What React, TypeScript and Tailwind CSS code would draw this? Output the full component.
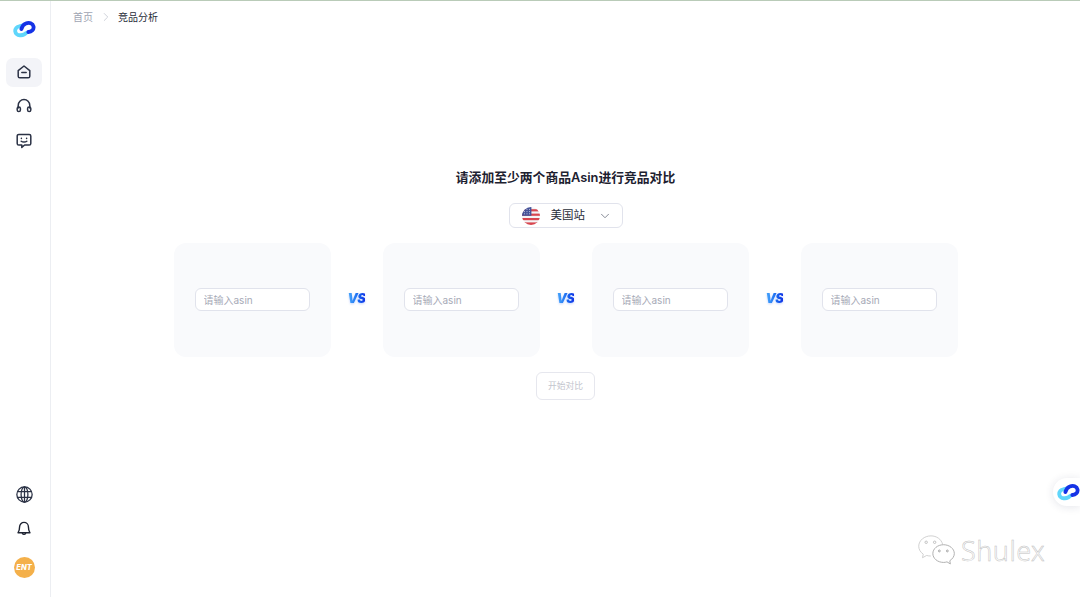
import { ChevronDown, ChevronRight } from 'lucide-react';

const FONT = '"Inter", "Noto Sans CJK SC", sans-serif';

function Logo({ className }: { className?: string }) {
  return (
    <svg viewBox="0 0 21 17" className={className} fill="none">
      <path d="M8.400 4.900 5.700 5.700a4 4 0 0 0 .6 8c1.500.2 2.600 0 3.700-.6l1.900-1.300" stroke="#5fd6fb" strokeWidth="3.500" strokeLinecap="round" />
      <path d="M7.700 8.100c.7-2.800 1.900-4.300 4-5.100 1.600-.7 3.200-.8 4.500-.2a4 4 0 0 1 1.400 6.600c-1 1-2.100 1.300-3.600 1.400" stroke="#1533e6" strokeWidth="3.500" strokeLinecap="round" />
    </svg>
  );
}

function HomeIcon() {
  return (
    <svg viewBox="0 0 16 16" className="w-[16px] h-[16px] -translate-y-px" fill="none" stroke="#2b3245" strokeWidth="1.5" strokeLinejoin="round" strokeLinecap="round">
      <path d="M2.200 6.600 8 2l5.800 4.600v5.600a1.600 1.600 0 0 1-1.600 1.600H3.800a1.600 1.600 0 0 1-1.600-1.600z" />
      <path d="M5.800 8.600h4.400" />
    </svg>
  );
}

function HeadsetIcon() {
  return (
    <svg viewBox="0 0 16 16" className="w-[16px] h-[16px] -translate-y-px" fill="none" stroke="#2b3245" strokeWidth="1.5" strokeLinejoin="round" strokeLinecap="round">
      <path d="M2.200 10V7.400a5.800 5.800 0 0 1 11.600 0V10" />
      <rect x="1.200" y="9" width="3.200" height="4.600" rx="1.600" />
      <rect x="11.600" y="9" width="3.200" height="4.600" rx="1.600" />
    </svg>
  );
}

function ChatIcon() {
  return (
    <svg viewBox="0 0 16 16" className="w-[16px] h-[16px] -translate-y-px" fill="none" stroke="#2b3245" strokeWidth="1.5" strokeLinejoin="round" strokeLinecap="round">
      <path d="M2.800 1.400h10.400a1.600 1.600 0 0 1 1.600 1.600v7.400a1.600 1.600 0 0 1-1.600 1.600H8.600l-2.800 2.400v-2.400h-3a1.600 1.600 0 0 1-1.600-1.600V3a1.600 1.600 0 0 1 1.600-1.600z" />
      <path d="M5.200 8.200c1.400 1.200 4.200 1.200 5.600 0" />
      <path d="M5.400 5.200v.4M10.600 5.200v.4" />
    </svg>
  );
}

function GlobeIcon() {
  return (
    <svg viewBox="0 0 16 16" className="w-[17px] h-[17px]" fill="none" stroke="#2b3245" strokeWidth="1.200">
      <circle cx="8" cy="8" r="7.200" />
      <ellipse cx="8" cy="8" rx="3.200" ry="7.200" />
      <path d="M8 .8v14.400M1.400 5.200h13.200M1.400 10.800h13.200" />
    </svg>
  );
}

function BellIcon() {
  return (
    <svg viewBox="0 0 16 16" className="w-[16px] h-[16px]" fill="none" stroke="#1f2433" strokeWidth="1.4" strokeLinejoin="round" strokeLinecap="round">
      <path d="M8 1.400a4.400 4.400 0 0 0-4.400 4.400c0 3.200-.6 4.600-1.600 6h12c-1-1.400-1.600-2.800-1.600-6A4.400 4.400 0 0 0 8 1.400z" />
      <path d="M6.400 12.200a1.700 1.700 0 0 0 3.200 0" />
    </svg>
  );
}

function UsFlag() {
  return (
    <svg viewBox="0 0 18 18" className="w-[18px] h-[18px]">
      <defs>
        <clipPath id="flag-circle">
          <circle cx="9" cy="9" r="9" />
        </clipPath>
      </defs>
      <g clipPath="url(#flag-circle)">
        <rect width="18" height="18" fill="#f4f4f6" />
        <rect y="2.200" width="18" height="2.200" fill="#d8464f" />
        <rect y="6.600" width="18" height="2.200" fill="#d8464f" />
        <rect y="11" width="18" height="2.200" fill="#d8464f" />
        <rect y="15.400" width="18" height="2.600" fill="#d8464f" />
        <rect width="9.400" height="8.800" fill="#46549a" />
        <path d="M2 2.400h.8M4.600 2.400h.8M7 2.400h.8M2 4.600h.8M4.600 4.600h.8M7 4.600h.8M2 6.800h.8M4.600 6.800h.8M7 6.800h.8" stroke="#e6e8f4" strokeWidth="0.9" />
      </g>
    </svg>
  );
}

function WechatMark() {
  return (
    <svg viewBox="0 0 42 34" className="w-[40px] h-[32px]" fill="none" stroke="#b8b8b8" strokeWidth="0.9">
      <path d="M27 11C25.600 5.400 20.400 2 14.600 2 7.600 2 1.600 6.800 1.600 13c0 3.400 1.800 6.400 4.800 8.400l-.8 3.800 4.400-2.400c1.400.4 2.800.6 4.400.6" fill="#ffffff" stroke="#c8c8c8" />
      <path d="M28 11.400c-6.400 0-11.400 4.200-11.400 9.400s5 9.400 11.400 9.400c1.200 0 2.400-.2 3.600-.6l3.600 2.200-.6-3.400c2.800-1.800 4.800-4.600 4.800-7.600 0-5.200-5.200-9.400-11.400-9.400z" fill="#ffffff" stroke="#a2a2a2" />
      <circle cx="9.500" cy="8.800" r="1.300" />
      <circle cx="18.500" cy="8.800" r="1.300" />
      <circle cx="23.500" cy="18" r="1" stroke="#999999" />
      <circle cx="32" cy="18" r="1" stroke="#999999" />
    </svg>
  );
}

function NavItem({ children, active }: { children: React.ReactNode; active?: boolean }) {
  return (
    <div className={`w-[36px] h-[29px] rounded-[7px] flex items-center justify-center ${active ? 'bg-[#f3f4f8]' : ''}`}>
      {children}
    </div>
  );
}

function AsinCard() {
  return (
    <div className="w-[157px] h-[114px] shrink-0 rounded-[12px] bg-[#f9fafc] flex items-center justify-center">
      <input
        placeholder="请输入asin"
        className="w-[115px] h-[23px] mb-px px-[8px] rounded-[6px] border border-[#e1e3ec] bg-white text-[10px] outline-none placeholder:text-[#a6a9b6]"
      />
    </div>
  );
}

function Vs() {
  return (
    <div className="w-[52px] shrink-0 flex justify-center mb-[3px]">
      <span className="text-[13px] font-black italic leading-none tracking-[-0.6px] bg-gradient-to-r from-[#4aa8fb] to-[#1530e6] bg-clip-text text-transparent drop-shadow-[0_1px_1px_rgba(60,110,250,0.3)]">
        VS
      </span>
    </div>
  );
}

export default function App() {
  return (
    <div className="relative w-[1080px] h-[597px] overflow-hidden bg-white flex flex-col" style={{ fontFamily: FONT }}>
      <div className="h-px bg-[#b9cbb8] shrink-0" />
      <div className="flex flex-1 min-h-0">
        <aside className="w-[51px] shrink-0 border-r border-[#eceef2] flex flex-col items-center pt-[19px] pb-[19px] pr-[2px]">
          <Logo className="w-[23px] h-[19px]" />
          <div className="mt-[19px] flex flex-col gap-[5.5px]">
            <NavItem active><HomeIcon /></NavItem>
            <NavItem><HeadsetIcon /></NavItem>
            <NavItem><ChatIcon /></NavItem>
          </div>
          <div className="mt-auto flex flex-col items-center">
            <GlobeIcon />
            <div className="mt-[18px]"><BellIcon /></div>
            <div className="mt-[20px] w-[21px] h-[21px] rounded-full bg-[#f4b04a] flex items-center justify-center text-white text-[7.5px] font-extrabold italic">
              ENT
            </div>
          </div>
        </aside>
        <main className="flex-1 min-w-0 flex flex-col">
          <nav className="h-[32px] pl-[22px] flex items-center text-[10px] shrink-0">
            <span className="text-[#a0a4b2]">首页</span>
            <ChevronRight className="w-[14px] h-[14px] mx-[5.5px] text-[#c8cbd5]" strokeWidth={1.5} />
            <span className="text-[#2a2e3a]">竞品分析</span>
          </nav>
          <div className="flex flex-col items-center pt-[135px]">
            <h1 className="text-[12.800px] leading-[20px] font-semibold text-[#1d2130]">请添加至少两个商品Asin进行竞品对比</h1>
            <div className="mt-[15px] w-[114px] h-[25px] rounded-[6px] border border-[#e1e3ec] bg-white flex items-center pl-[12px] pr-[10px]">
              <UsFlag />
              <span className="ml-[11px] text-[11.500px] text-[#2a2e3a]">美国站</span>
              <ChevronDown className="ml-auto w-[14px] h-[14px] text-[#767a87]" strokeWidth={1.5} />
            </div>
            <div className="mt-[15px] flex items-center">
              <AsinCard />
              <Vs />
              <AsinCard />
              <Vs />
              <AsinCard />
              <Vs />
              <AsinCard />
            </div>
            <button className="mt-[15px] w-[59px] h-[28px] rounded-[6px] border border-[#e6e7ee] bg-white text-[8.800px] text-[#c3c5ce]">
              开始对比
            </button>
          </div>
        </main>
      </div>
      <div className="absolute right-0 top-[478px] w-[27px] h-[28px] rounded-l-[14px] bg-white shadow-[0_1px_8px_rgba(30,40,80,0.12)] flex items-center pl-[4px]">
        <Logo className="w-[23px] h-[19px] shrink-0" />
      </div>
      <div className="absolute left-[917px] top-[534px] flex items-center">
        <WechatMark />
        <span className="ml-[4px] text-[27px] leading-none font-light tracking-[0.5px] text-white [-webkit-text-stroke:0.5px_#c0c0c0]" style={{ fontFamily: '"Noto Sans", sans-serif' }}>
          Shulex
        </span>
      </div>
    </div>
  );
}
